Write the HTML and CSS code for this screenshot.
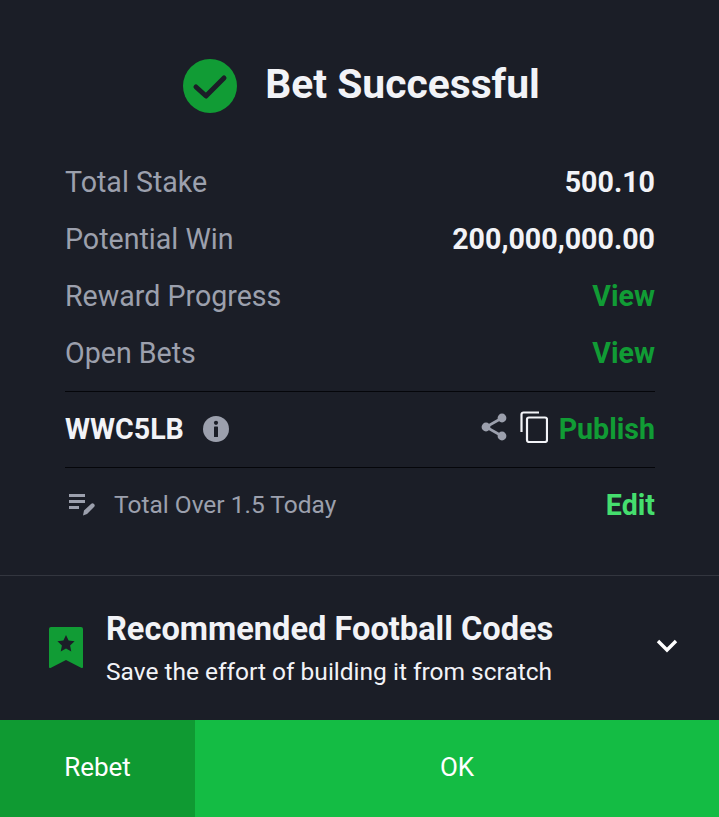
FILE: index.html
```html
<!DOCTYPE html>
<html lang="en">
<head>
    <meta charset="UTF-8">
    <meta name="viewport" content="width=device-width, initial-scale=1.0">
    <title>Bet Successful</title>
    <link rel="stylesheet" href="styles.css">
</head>
<body>
    <div class="sheet">
        <div class="result">
            <div class="result-title">
                <svg class="check-icon" viewBox="0 0 54 54">
                    <circle cx="27" cy="27" r="27" fill="#119c35"/>
                    <path d="M13 28l10 9 18-18" fill="none" stroke="#1b1e27" stroke-width="5" stroke-linecap="round" stroke-linejoin="round"/>
                </svg>
                <h1>Bet Successful</h1>
            </div>

            <div class="row">
                <span class="label">Total Stake</span>
                <span class="value">500.10</span>
            </div>
            <div class="row">
                <span class="label">Potential Win</span>
                <span class="value">200,000,000.00</span>
            </div>
            <div class="row">
                <span class="label">Reward Progress</span>
                <span class="link">View</span>
            </div>
            <div class="row">
                <span class="label">Open Bets</span>
                <span class="link">View</span>
            </div>

            <div class="code-row">
                <div class="code-left">
                    <span class="code">WWC5LB</span>
                    <svg class="info-icon" viewBox="0 0 26 26">
                        <circle cx="13" cy="13" r="13" fill="#9ca0ad"/>
                        <circle cx="13" cy="6.800" r="2.100" fill="#1b1e27"/>
                        <rect x="11" y="10.600" width="4" height="10.400" rx="0.600" fill="#1b1e27"/>
                    </svg>
                </div>
                <div class="code-right">
                    <svg class="share-icon" viewBox="0 0 26 30">
                        <path d="M21 6L5 15l16 9" fill="none" stroke="#9ca0ad" stroke-width="2.600"/>
                        <circle cx="21" cy="6" r="4.400" fill="#9ca0ad"/>
                        <circle cx="5" cy="15" r="4.400" fill="#9ca0ad"/>
                        <circle cx="21" cy="24" r="4.400" fill="#9ca0ad"/>
                    </svg>
                    <svg class="copy-icon" viewBox="0 0 28 32">
                        <path d="M1.500 21V3.500a2 2 0 0 1 2-2H19" fill="none" stroke="#f2f3f7" stroke-width="2.200"/>
                        <rect x="7" y="6.500" width="20" height="24.500" rx="2" fill="none" stroke="#f2f3f7" stroke-width="2.200"/>
                    </svg>
                    <span class="publish">Publish</span>
                </div>
            </div>

            <div class="note-row">
                <div class="note-left">
                    <svg class="note-icon" viewBox="0 0 26 24">
                        <path d="M0 2.500h16M0 8.500h16M0 14.500h10" fill="none" stroke="#9ca0ad" stroke-width="2.800"/>
                        <path d="M14 22.500l1-5 7-6.500a2 2 0 0 1 3 3l-7 7z" fill="#9ca0ad"/>
                    </svg>
                    <span class="note">Total Over 1.5 Today</span>
                </div>
                <span class="edit">Edit</span>
            </div>
        </div>

        <div class="recommend">
            <svg class="bookmark-icon" viewBox="0 0 34 42">
                <path d="M0 2a2 2 0 0 1 2-2h30a2 2 0 0 1 2 2v38a1 1 0 0 1-1.500.900L17 33 1.500 40.900a1 1 0 0 1-1.500-.900z" fill="#119c35"/>
                <path d="M17 8l2.600 5.600 6 .7-4.500 4.100 1.200 6L17 21.400 11.700 24.400l1.200-6-4.500-4.100 6-.7z" fill="#1b1e27"/>
            </svg>
            <div class="recommend-text">
                <h2>Recommended Football Codes</h2>
                <p>Save the effort of building it from scratch</p>
            </div>
            <svg class="chevron" viewBox="0 0 22 14">
                <path d="M2 2l9 9 9-9" fill="none" stroke="#fff" stroke-width="3.400"/>
            </svg>
        </div>

        <div class="actions">
            <button type="button" class="rebet">Rebet</button>
            <button type="button" class="ok">OK</button>
        </div>
    </div>
</body>
</html>
```

FILE: styles.css
```css
* {
    box-sizing: border-box;
}

html, body {
    height: 100%;
}

body {
    margin: 0;
    background-color: #1b1e27;
    color: #f2f3f7;
    font-family: Roboto, Arial, sans-serif;
}

.sheet {
    display: flex;
    flex-direction: column;
    height: 817px;
    overflow: hidden;
}

.result {
    padding: 59px 64px 0 65px;
    height: 576px;
    border-bottom: 1px solid #33363f;
}

.result-title {
    display: flex;
    align-items: center;
    justify-content: center;
    gap: 28px;
    height: 54px;
    margin-bottom: 40px;
    padding-left: 3px;
}

.check-icon {
    width: 54px;
    height: 54px;
}

.result-title h1 {
    margin: 0 0 4px;
    font-size: 40.800px;
    font-weight: 700;
}

.row {
    display: flex;
    justify-content: space-between;
    align-items: center;
    height: 57px;
    font-size: 28.600px;
}

.label {
    color: #9ca0ad;
}

.value {
    font-weight: 700;
}

.link {
    color: #119c35;
    font-weight: 700;
}

.code-row {
    display: flex;
    justify-content: space-between;
    align-items: center;
    height: 77px;
    margin-top: 10px;
    padding-bottom: 2px;
    border-top: 1px solid #05060a;
    border-bottom: 1px solid #05060a;
}

.code-left, .code-right, .note-left {
    display: flex;
    align-items: center;
}

.code {
    font-size: 28.600px;
    font-weight: 700;
}

.info-icon {
    width: 26px;
    height: 26px;
    margin-left: 19px;
}

.share-icon {
    width: 26px;
    height: 30px;
    margin: 0 13px 3px 0;
}

.copy-icon {
    width: 28px;
    height: 32px;
    margin: 0 11px 3px 0;
}

.publish {
    color: #119c35;
    font-size: 28.600px;
    font-weight: 700;
}

.note-row {
    display: flex;
    justify-content: space-between;
    align-items: center;
    height: 74px;
}

.note-icon {
    width: 26px;
    height: 24px;
    margin: 0 19px 0 4px;
}

.note {
    color: #9ca0ad;
    font-size: 24.500px;
    margin-bottom: 2px;
}

.edit {
    color: #45de6e;
    font-size: 28.600px;
    font-weight: 700;
}

.recommend {
    display: flex;
    align-items: center;
    height: 144px;
    padding: 0 41px 0 49px;
}

.bookmark-icon {
    width: 34px;
    height: 42px;
    margin-right: 23px;
}

.recommend-text {
    flex: 1;
}

.recommend-text h2 {
    margin: 0 0 9px;
    font-size: 32.600px;
    font-weight: 700;
    line-height: 38px;
}

.recommend-text p {
    margin: 0;
    font-size: 24.500px;
    line-height: 30px;
}

.chevron {
    width: 22px;
    height: 14px;
    margin-bottom: 4px;
}

.actions {
    display: flex;
    height: 97px;
}

.actions button {
    border: none;
    color: #fff;
    font-family: inherit;
    font-size: 26px;
    padding-bottom: 5px;
}

.rebet {
    width: 195px;
    background-color: #0f9a32;
}

.ok {
    flex: 1;
    background-color: #14bc44;
}
```
